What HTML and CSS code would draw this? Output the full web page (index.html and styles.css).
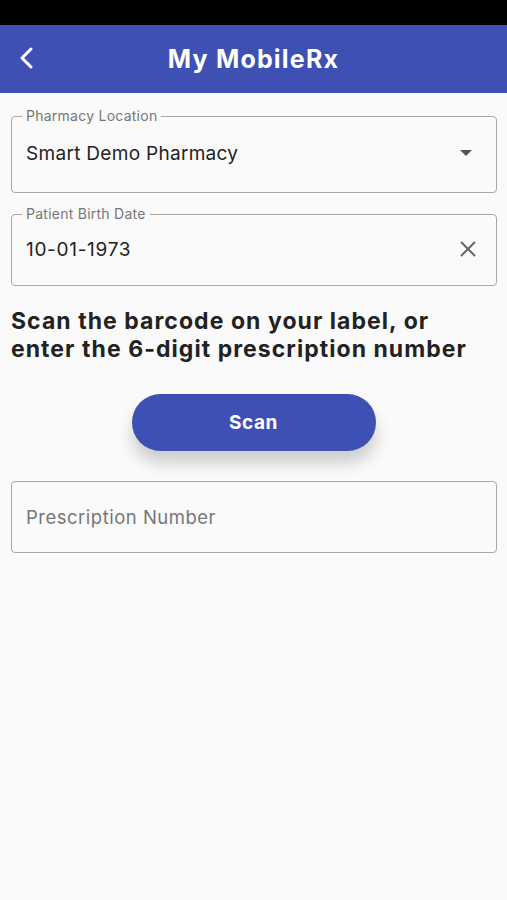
FILE: index.html
```html
<!DOCTYPE html>
<html>
<head>
<meta charset="utf-8">
<link rel="stylesheet" href="styles.css">
</head>
<body>
<div class="status"></div>
<header class="appbar">
  <svg class="back" width="20" height="28" viewBox="0 0 20 28"><path d="M14 5 L5 14 L14 23" fill="none" stroke="#fff" stroke-width="3" stroke-linecap="round" stroke-linejoin="round"/></svg>
  <h1 class="title">My MobileRx</h1>
</header>
<main class="content">
  <div class="field select">
    <span class="label">Pharmacy Location</span>
    <span class="value">Smart Demo Pharmacy</span>
    <svg class="caret" width="12" height="7" viewBox="0 0 12 7"><path d="M0 0 H12 L6 6 Z" fill="#555"/></svg>
  </div>
  <div class="field date">
    <span class="label">Patient Birth Date</span>
    <span class="value date-value">10-01-1973</span>
    <svg class="clear" width="18" height="18" viewBox="0 0 18 18"><path d="M2 2 L16 16 M16 2 L2 16" stroke="#666" stroke-width="2" fill="none"/></svg>
  </div>
  <p class="instructions">Scan the barcode on your label, or<br>enter the 6-digit prescription number</p>
  <div class="btn-row"><button class="scan">Scan</button></div>
  <div class="field rx">
    <span class="placeholder">Prescription Number</span>
  </div>
</main>
</body>
</html>
```
FILE: styles.css
```css
* { box-sizing: border-box; }
html, body { margin: 0; padding: 0; }
body {
  width: 507px;
  height: 900px;
  background: #fafafa;
  font-family: Inter, "Noto Sans", sans-serif;
  overflow: hidden;
}
.status { height: 25px; background: #000; }
.appbar {
  height: 68px;
  background: #3f50b5;
  display: flex;
  align-items: center;
  justify-content: center;
  position: relative;
}
.back { position: absolute; left: 17px; top: 19px; }
.title {
  margin: 0;
  color: #fff;
  font-size: 25px;
  font-weight: 700;
  letter-spacing: 1.2px;
}
.content { padding: 23px 10px 0 11px; display: flex; flex-direction: column; }
.field {
  position: relative;
  border: 1.5px solid #a8a8a8;
  border-radius: 4px;
  display: flex;
  align-items: center;
  padding: 0 14px;
}
.field.select { height: 77px; padding-bottom: 2px; }
.field.date { height: 72px; margin-top: 21px; padding-bottom: 2px; }
.label {
  position: absolute;
  top: -9px;
  left: 10px;
  padding: 0 4px;
  background: #fafafa;
  color: #777;
  font-size: 14px;
  line-height: 16px;
  letter-spacing: 0.25px;
}
.value { flex: 1; color: #222; font-size: 19px; letter-spacing: 0.3px; }
.date-value { letter-spacing: 0.7px; }
.caret { margin-right: 10px; }
.clear { margin-right: 5px; }
.instructions {
  margin: 21px 0 0 0;
  color: #222;
  font-size: 23px;
  font-weight: 700;
  line-height: 28px;
  letter-spacing: 1.05px;
  white-space: nowrap;
}
.btn-row { display: flex; justify-content: center; margin-top: 31px; padding-right: 1px; }
.scan {
  width: 244px;
  height: 57px;
  border: none;
  border-radius: 29px;
  background: #3f50b5;
  color: #fff;
  font-family: Inter, "Noto Sans", sans-serif;
  font-size: 19px;
  font-weight: 700;
  letter-spacing: 0.6px;
  box-shadow: 0 12px 16px rgba(0,0,0,0.18);
}
.field.rx { height: 72px; margin-top: 30px; }
.placeholder { color: #777; font-size: 18.5px; letter-spacing: 0.5px; }
```
